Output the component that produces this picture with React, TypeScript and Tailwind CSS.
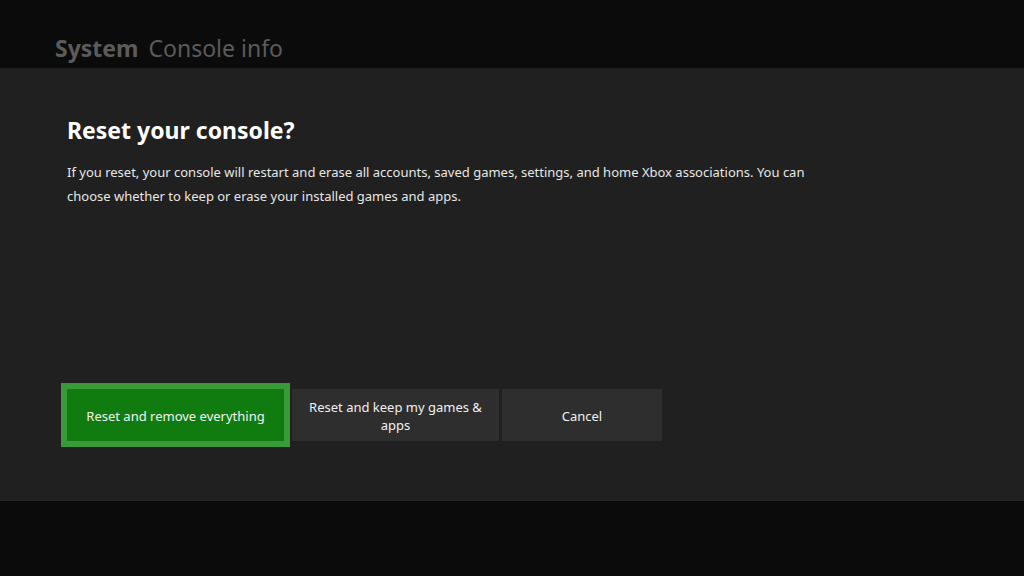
export default function App() {
  const font = { fontFamily: '"Noto Sans", "Open Sans", sans-serif' };
  return (
    <div className="w-[1024px] h-[576px] bg-[#0b0b0b] flex flex-col overflow-hidden" style={font}>
      <div className="h-[68px] shrink-0 pl-[55px] pt-[37px] flex items-baseline gap-[10px] leading-none">
        <span className="text-[23px] font-bold text-[#5b5b5b]">System</span>
        <span className="text-[23px] text-[#5b5b5b]">Console info</span>
      </div>
      <div className="h-[433px] shrink-0 bg-[#202020] flex flex-col pl-[67px] pt-[46px] pb-[59px] border-b border-[#262626]">
        <h1 className="text-[23px] font-bold text-white leading-[32px]">Reset your console?</h1>
        <p className="mt-[14px] text-[13px] leading-[24px] text-[#e6e6e6] w-[760px]">
          If you reset, your console will restart and erase all accounts, saved games, settings, and home Xbox associations. You can choose whether to keep or erase your installed games and apps.
        </p>
        <div className="mt-auto flex items-center">
          <button className="w-[217px] h-[52px] pt-[3px] bg-[#107c10] outline-[6px] outline-solid outline-[#3a9a3a] text-[13px] text-[#f2f2f2] mr-[8px]">
            Reset and remove everything
          </button>
          <button className="w-[207px] h-[52px] pt-[2px] bg-[#2e2e2e] text-[13px] leading-[18px] text-[#f0f0f0] px-[12px] mr-[3px]">
            Reset and keep my games &amp; apps
          </button>
          <button className="w-[160px] h-[52px] pt-[3px] bg-[#2e2e2e] text-[13px] text-[#f0f0f0]">
            Cancel
          </button>
        </div>
      </div>
      <div className="flex-1 bg-[#0b0b0b]" />
    </div>
  );
}
